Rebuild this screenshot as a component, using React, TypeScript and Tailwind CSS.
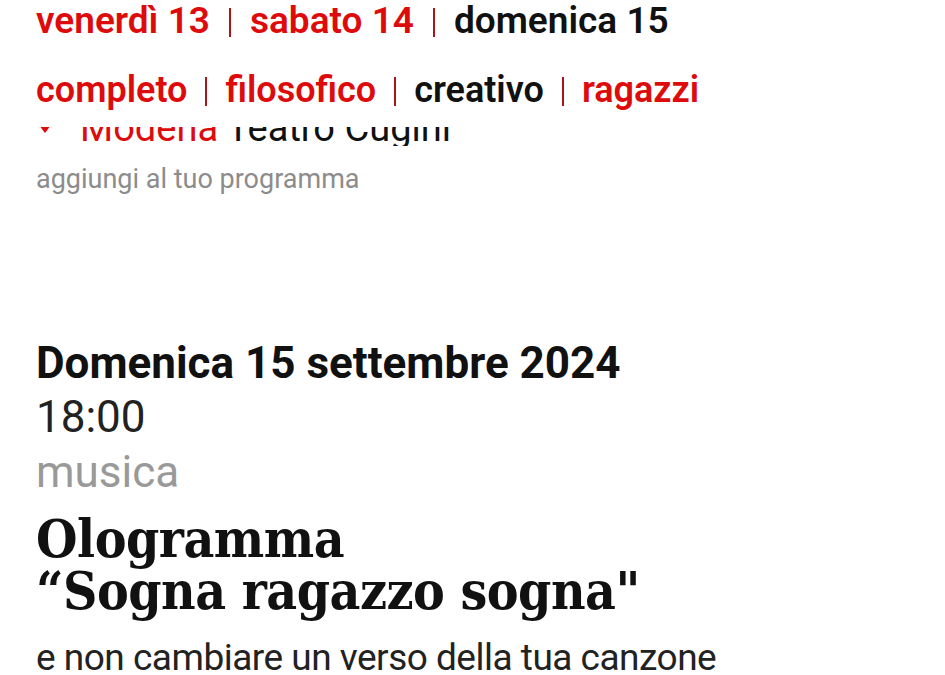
import React from 'react';

const days = [
  { label: 'venerdì 13', active: false },
  { label: 'sabato 14', active: false },
  { label: 'domenica 15', active: true },
];

const paths = [
  { label: 'completo', active: false },
  { label: 'filosofico', active: false },
  { label: 'creativo', active: true },
  { label: 'ragazzi', active: false },
];

const Sep: React.FC<{ wide?: boolean }> = ({ wide }) => (
  <span
    className={`${wide ? 'mx-[19px]' : 'mx-[18px]'} inline-block h-[29px] w-[2px] bg-[#a8161c] align-[-4px]`}
  />
);

const FilterRow: React.FC<{ items: { label: string; active: boolean }[]; big?: boolean }> = ({ items, big }) => (
  <div className={`${big ? 'text-[37px]' : 'text-[36px]'} whitespace-nowrap font-semibold leading-[42px]`}>
    {items.map((it, i) => (
      <React.Fragment key={it.label}>
        {i > 0 && <Sep wide={big} />}
        <span className={it.active ? 'text-[#111]' : 'text-[#dd0b0b]'}>{it.label}</span>
      </React.Fragment>
    ))}
  </div>
);

const App: React.FC = () => {
  return (
    <div className="min-h-[675px] bg-white font-['Roboto',sans-serif] text-[#111]">
      {/* day + path filters */}
      <div className="h-[127px] px-[36px]">
        <FilterRow items={days} big />
        <div className="mt-[27px]">
          <FilterRow items={paths} />
        </div>
      </div>

      {/* previous event, scrolled under the filters */}
      <div className="h-[19px] overflow-hidden px-[36px]">
        <div className="-mt-[21px] flex items-start gap-[26px] whitespace-nowrap text-[38px] leading-[44px]">
          <svg width="18" height="26" viewBox="0 0 18 26" className="mt-[1px] shrink-0">
            <path d="M9 0C4 0 0 4 0 9c0 6.5 9 17 9 17s9-10.5 9-17c0-5-4-9-9-9z" fill="#dd0b0b" />
          </svg>
          <span>
            <span className="text-[#dd0b0b]">Modena</span> Teatro Cugini
          </span>
        </div>
      </div>

      <div className="mt-[17px] px-[36px] text-[27px] leading-[32px] text-[#8c8c8c]">
        aggiungi al tuo programma
      </div>

      {/* event */}
      <div className="mt-[142px] px-[36px]">
        <div className="text-[44px] font-bold leading-[52px]">Domenica 15 settembre 2024</div>
        <div className="mt-[2px] text-[44px] leading-[52px] text-[#222]">18:00</div>
        <div className="mt-[3px] text-[44px] leading-[52px] text-[#999]">musica</div>
        <h1 className="mt-[14px] font-['DejaVu_Serif_Condensed','DejaVu_Serif',serif] text-[53px] font-bold leading-[52px] tracking-[-0.5px] font-stretch-condensed">
          Ologramma
          <br />
          “Sogna ragazzo sogna"
        </h1>
        <div className="mt-[20px] whitespace-nowrap text-[37px] leading-[44px] tracking-[-0.5px] text-[#222]">
          e non cambiare un verso della tua canzone
        </div>
      </div>
    </div>
  );
};

export default App;
